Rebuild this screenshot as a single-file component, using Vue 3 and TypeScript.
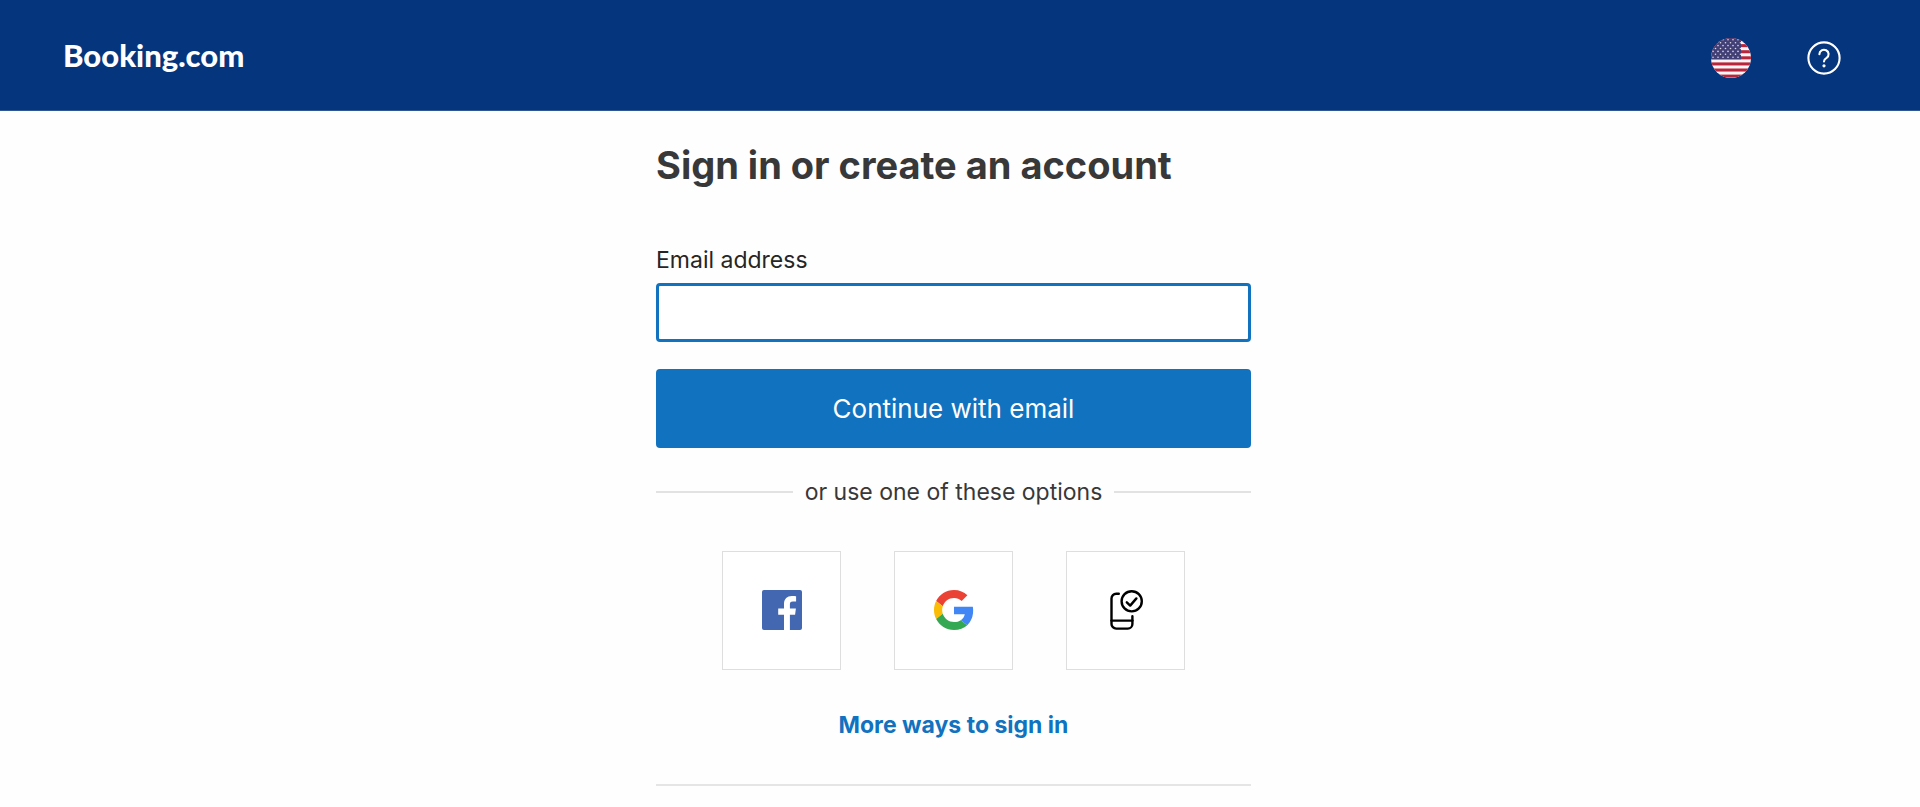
<script setup lang="ts">
import { ref } from 'vue'

const email = ref<string>('')
const stripes: number[] = [0, 1, 2, 3, 4, 5, 6]

interface Star {
  x: number
  y: number
}

const stars: Star[] = []
for (let row = 0; row < 7; row++) {
  for (let col = 0; col < 6; col++) {
    stars.push({ x: 2 + col * 5 + (row % 2) * 2.5, y: 1.8 + row * 2.9 })
  }
}
</script>

<template>
  <div class="page">
    <header class="bar">
      <a class="brand" href="#">Booking.com</a>
      <nav class="tools" aria-label="Page tools">
        <button class="tool" type="button" aria-label="Select your language">
          <svg viewBox="0 0 40 40" width="40" height="40" aria-hidden="true">
            <defs>
              <clipPath id="flag-circle"><circle cx="20" cy="20" r="20" /></clipPath>
            </defs>
            <g clip-path="url(#flag-circle)">
              <rect width="40" height="40" fill="#f8f5f7" />
              <rect v-for="n in stripes" :key="n" x="0" :y="n * 6.1" width="40" height="3.05" fill="#b9263b" />
              <rect width="30" height="21.3" fill="#413f76" />
              <circle v-for="(s, i) in stars" :key="i" :cx="s.x" :cy="s.y" r="0.8" fill="#dcd9e8" />
            </g>
          </svg>
        </button>
        <a class="tool" href="#" aria-label="Help">
          <svg viewBox="0 0 34 34" width="34" height="34" fill="none" stroke="#fff" aria-hidden="true">
            <circle cx="17" cy="17" r="15.6" stroke-width="2.1" />
            <path d="M12.400 13.200a4.600 4.400 0 1 1 7.200 3.600c-1.700 1-2.600 1.700-2.600 3.600" stroke-width="2.1" stroke-linecap="round" />
            <circle cx="17" cy="24.800" r="1.600" fill="#fff" stroke="none" />
          </svg>
        </a>
      </nav>
    </header>

    <main class="content">
      <form class="panel" @submit.prevent>
        <h1 class="title">Sign in or create an account</h1>
        <label class="label" for="email">Email address</label>
        <input id="email" v-model="email" class="field" type="email" autocomplete="username" />
        <button class="submit" type="submit">Continue with email</button>
        <div class="divider">or use one of these options</div>
        <div class="options">
          <button class="option" type="button" aria-label="Sign in with Facebook">
            <svg viewBox="0 0 40 40" width="40" height="40" aria-hidden="true">
              <rect width="40" height="40" rx="2" fill="#4367b0" />
              <path d="M22 40V24.700h-5.800v-6.200H22v-4.700c0-5 3.200-7.800 7.700-7.800 2.200 0 3.800.2 4.400.3v5.200h-3.200c-2.500 0-3 1.200-3 3v4h6l-.8 6.200h-5.200V40z" fill="#fff" />
            </svg>
          </button>
          <button class="option" type="button" aria-label="Sign in with Google">
            <svg viewBox="0 0 48 48" width="40" height="40" aria-hidden="true">
              <path fill="#ea4335" d="M24 9.500c3.540 0 6.710 1.220 9.210 3.600l6.850-6.850C35.900 2.380 30.470 0 24 0 14.620 0 6.510 5.380 2.560 13.220l7.980 6.190C12.430 13.720 17.740 9.500 24 9.500z" />
              <path fill="#4285f4" d="M46.980 24.550c0-1.570-.15-3.090-.38-4.550H24v9.020h12.940c-.58 2.960-2.260 5.480-4.780 7.180l7.730 6c4.510-4.180 7.090-10.360 7.090-17.650z" />
              <path fill="#fbbc05" d="M10.530 28.590c-.48-1.450-.76-2.990-.76-4.590s.27-3.140.76-4.590l-7.980-6.190C.92 16.460 0 20.120 0 24c0 3.880.92 7.540 2.560 10.780l7.970-6.190z" />
              <path fill="#34a853" d="M24 48c6.480 0 11.930-2.130 15.890-5.810l-7.730-6c-2.150 1.450-4.920 2.300-8.160 2.300-6.260 0-11.570-4.220-13.470-9.910l-7.980 6.190C6.510 42.620 14.620 48 24 48z" />
            </svg>
          </button>
          <button class="option" type="button" aria-label="Sign in with a mobile device">
            <svg viewBox="0 0 40 40" width="40" height="40" fill="none" stroke="#000" stroke-width="2.400" stroke-linecap="round" stroke-linejoin="round" aria-hidden="true">
              <path d="M12.800 3.800H10.200a4.700 4.700 0 0 0-4.700 4.700v25.400a4.700 4.700 0 0 0 4.700 4.700h11.500a4.700 4.700 0 0 0 4.700-4.700v-7.600" />
              <path d="M5.500 30.600h20.900" />
              <circle cx="25.700" cy="11.300" r="10.100" />
              <path d="M20.800 12.300l3.400 3.300 6.200-7.200" />
            </svg>
          </button>
        </div>
        <a class="more" href="#">More ways to sign in</a>
        <hr class="rule" />
      </form>
    </main>
  </div>
</template>

<style>
body {
  margin: 0;
  background: #fefefe;
}
</style>

<style scoped>
.page {
  font-family: Inter, "Liberation Sans", sans-serif;
  color: #383838;
}

.bar {
  display: flex;
  align-items: center;
  justify-content: space-between;
  box-sizing: border-box;
  min-height: 111px;
  padding: 0 79px 0 63px;
  background: #05357c;
  border-bottom: 1px solid #2f5793;
}

.brand {
  font-family: Lato, sans-serif;
  font-size: 31px;
  font-weight: 900;
  line-height: 40px;
  color: #fff;
  text-decoration: none;
}

.tools {
  display: flex;
  align-items: center;
  gap: 56px;
  padding-top: 6px;
}

.tool {
  display: block;
  padding: 0;
  border: 0;
  background: none;
}

.tool svg,
.option svg {
  display: block;
}

.content {
  padding: 32px 13px 20px 0;
}

.panel {
  display: flex;
  flex-direction: column;
  width: 100%;
  max-width: 595px;
  margin: 0 auto;
}

.title {
  margin: 0 0 57px;
  font-size: 38px;
  font-weight: 700;
  line-height: 44px;
  white-space: nowrap;
}

.label {
  margin-bottom: 7px;
  font-size: 23px;
  line-height: 32px;
  color: #262626;
}

.field {
  box-sizing: border-box;
  width: 100%;
  height: 59px;
  margin-bottom: 27px;
  padding: 0 16px;
  border: 3px solid #1172c0;
  border-radius: 4px;
  outline: 0;
  background: #fff;
  font: inherit;
  font-size: 23px;
}

.submit {
  height: 79px;
  padding: 0;
  border: 0;
  border-radius: 4px;
  background: #1172c0;
  color: #fff;
  font-family: inherit;
  font-size: 26px;
  line-height: 32px;
}

.divider {
  display: flex;
  align-items: center;
  gap: 12px;
  margin: 28px 0 43px;
  font-size: 23px;
  line-height: 32px;
}

.divider::before,
.divider::after {
  content: "";
  flex: 1;
  height: 2px;
  background: #e2e2e2;
}

.options {
  display: flex;
  justify-content: center;
  gap: 53px;
  margin-bottom: 39px;
}

.option {
  display: flex;
  align-items: center;
  justify-content: center;
  width: 119px;
  height: 119px;
  padding: 0 0 1px;
  border: 1px solid #dedede;
  background: #fff;
}

.more {
  align-self: center;
  font-size: 23px;
  font-weight: 700;
  line-height: 32px;
  color: #1172c0;
  text-decoration: none;
}

.rule {
  width: 100%;
  height: 2px;
  margin: 43px 0 0;
  border: 0;
  background: #e5e5e5;
}
</style>
